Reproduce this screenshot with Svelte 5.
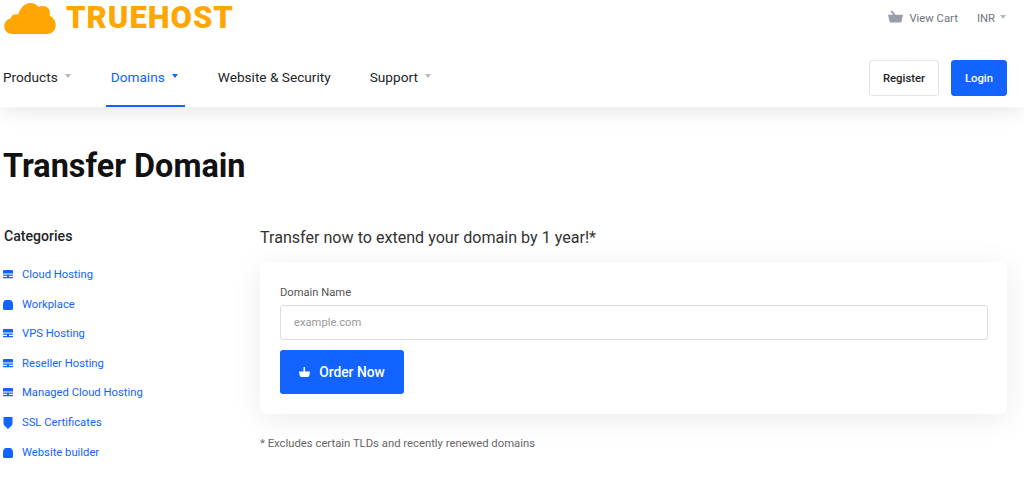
<script>
  const categories = [
    { name: 'Cloud Hosting', icon: 'server' },
    { name: 'Workplace', icon: 'box' },
    { name: 'VPS Hosting', icon: 'server' },
    { name: 'Reseller Hosting', icon: 'server' },
    { name: 'Managed Cloud Hosting', icon: 'server' },
    { name: 'SSL Certificates', icon: 'shield' },
    { name: 'Website builder', icon: 'box' }
  ];
  const nav = [
    { label: 'Products', caret: true },
    { label: 'Domains', caret: true, active: true },
    { label: 'Website & Security' },
    { label: 'Support', caret: true }
  ];
</script>

{#snippet catIcon(kind)}
  <svg class="cat-icon" viewBox="0 0 10 12" aria-hidden="true">
    {#if kind === 'server'}
      <path d="M.8 1h8.400c.5 0 .8.300.8.800V4.500H0V1.800C0 1.300.300 1 .8 1zM0 5.500h10v1.300H6V8h4v1.300H0V8h4V6.800H0z" fill="currentColor" />
    {:else if kind === 'box'}
      <path d="M3 1h4c1.300 0 2 .8 2.400 2L10 4.500v5.300A1.200 1.200 0 0 1 8.800 11H1.200A1.200 1.200 0 0 1 0 9.800V4.500L.6 3C1 1.800 1.700 1 3 1z" fill="currentColor" />
    {:else}
      <path d="M.5 0h9v6.500C9.500 8.500 7 10 5 12 3 10 .5 8.500.5 6.500z" fill="currentColor" />
    {/if}
  </svg>
{/snippet}

<header class="header">
  <div class="top">
    <div class="logo">
      <svg class="cloud" viewBox="0 0 53 35" aria-hidden="true">
        <path d="M8 33C3.500 33 0 29.500 0 25c0-4 2.800-7.300 6.500-8C7 14.500 9.200 12.700 12 12.700c.8 0 1.500.1 2.200.4C16 6.500 21 1 27 1c3.500 0 6.500 1.600 8.500 4.200C36.800 4.400 38.300 4 40 4c4 0 7 3 7 7 0 1-.1 2-.5 3C50.300 15.500 53 19.800 53 24c0 5-4 9-8.500 9z" fill="#ffa602" />
      </svg>
      <span class="logo-text">TRUEHOST</span>
    </div>
    <div class="top-right">
      <a class="cart" href="#cart">
        <svg class="cart-icon" viewBox="0 0 16 13" aria-hidden="true">
          <path d="M0 4.500h5.500L2.800 1.200 4.300 0l3.600 4.500H16l-1.600 7.200a1.500 1.500 0 0 1-1.500 1.300H3.100a1.500 1.500 0 0 1-1.500-1.300z" fill="currentColor" />
        </svg>
        View Cart
      </a>
      <span class="currency">INR<i class="caret"></i></span>
    </div>
  </div>
  <div class="navbar">
    <nav class="nav">
      {#each nav as item}
        <a class="nav-link" class:active={item.active} href="#nav">
          {item.label}
          {#if item.caret}<i class="caret"></i>{/if}
        </a>
      {/each}
    </nav>
    <div class="auth">
      <button class="btn-register">Register</button>
      <button class="btn-login">Login</button>
    </div>
  </div>
</header>

<main class="main">
  <h1>Transfer Domain</h1>
  <div class="columns">
    <aside class="sidebar">
      <h2>Categories</h2>
      <ul>
        {#each categories as cat}
          <li><a href="#cat">{@render catIcon(cat.icon)}{cat.name}</a></li>
        {/each}
      </ul>
    </aside>
    <section class="content">
      <p class="lead">Transfer now to extend your domain by 1 year!*</p>
      <div class="card">
        <label for="domain">Domain Name</label>
        <input id="domain" type="text" placeholder="example.com" />
        <button class="btn-order">
          <svg class="order-icon" viewBox="0 0 11 10" aria-hidden="true">
            <path d="M4.500 0H6v4.500h5l-.7 4A1.800 1.800 0 0 1 8.500 10h-6A1.800 1.800 0 0 1 .7 8.500L0 4.500h4.500z" fill="currentColor" />
          </svg>
          Order Now
        </button>
      </div>
      <p class="note">* Excludes certain TLDs and recently renewed domains</p>
    </section>
  </div>
</main>

<style>
  :global(body) {
    background: #fff;
    font-family: Roboto, "Liberation Sans", sans-serif;
    color: #212529;
  }

  a { text-decoration: none; color: inherit; }

  .header {
    background: #fff;
    height: 107px;
    box-shadow: 0 0 24px rgba(0, 0, 0, 0.13);
    position: relative;
  }

  .top {
    height: 47px;
    display: flex;
    justify-content: space-between;
    padding: 0 18px 0 4px;
  }

  .logo {
    display: flex;
    align-items: flex-start;
    gap: 10px;
    padding-top: 2px;
  }

  .cloud {
    width: 52px;
    height: 34px;
    display: block;
  }

  .logo-text {
    font-size: 31px;
    font-weight: 900;
    line-height: 32px;
    color: #ffa602;
    letter-spacing: 1px;
  }

  .top-right {
    display: flex;
    align-items: center;
    height: 36px;
    font-size: 11.300px;
    color: #6c757d;
  }

  .cart {
    display: flex;
    align-items: center;
    gap: 6px;
  }

  .cart-icon {
    width: 15px;
    height: 13px;
    margin-top: -3px;
    color: #9a9ca8;
  }

  .currency {
    margin-left: 19px;
    display: flex;
    align-items: center;
    gap: 5px;
  }

  .caret {
    display: inline-block;
    width: 0;
    height: 0;
    border-left: 3.500px solid transparent;
    border-right: 3.500px solid transparent;
    border-top: 4px solid #b5b8bd;
    margin-bottom: 2px;
  }

  .navbar {
    height: 60px;
    display: flex;
    justify-content: space-between;
    align-items: flex-start;
    padding: 0 17px 0 3px;
  }

  .nav {
    display: flex;
  }

  .nav-link {
    display: flex;
    align-items: center;
    gap: 7px;
    height: 60px;
    font-size: 13.650px;
    color: #212529;
    margin-right: 39px;
    box-sizing: border-box;
  }

  .nav-link.active {
    color: #1263ff;
    padding: 2px 7px 0 5px;
    margin: 0 33px 0 -4px;
    border-bottom: 2px solid #1263ff;
  }

  .nav-link.active .caret { border-top-color: #1263ff; }

  .auth {
    display: flex;
    gap: 12px;
    padding-top: 13px;
  }

  button { font-family: inherit; cursor: pointer; }

  .btn-register,
  .btn-login {
    height: 36px;
    border-radius: 3px;
    font-size: 11.300px;
    font-weight: 500;
  }

  .btn-register {
    width: 70px;
    background: #fff;
    color: #212529;
    border: 1px solid #e4e4e4;
  }

  .btn-login {
    width: 56px;
    background: #1263ff;
    color: #fff;
    border: 1px solid #1263ff;
  }

  .main { padding: 0 17px 0 3px; }

  h1 {
    margin: 0;
    padding-top: 40px;
    font-size: 32.400px;
    line-height: 38px;
    font-weight: 700;
    color: #111;
  }

  .columns {
    display: flex;
    margin-top: 41px;
  }

  .sidebar { width: 257px; flex: none; }

  h2 {
    margin: 0;
    padding-left: 1px;
    font-size: 14.100px;
    line-height: 20px;
    font-weight: 500;
  }

  ul {
    list-style: none;
    margin: 21px 0 0;
    padding: 0;
  }

  li {
    height: 29.600px;
    font-size: 11.250px;
    line-height: 16px;
    color: #1263ff;
  }

  li a {
    display: flex;
    align-items: center;
    gap: 9px;
    height: 16px;
  }

  .cat-icon {
    width: 10px;
    height: 12px;
    flex: none;
  }

  .content { flex: 1; min-width: 0; }

  .lead {
    margin: 0;
    padding-top: 1px;
    font-size: 16.100px;
    line-height: 22px;
    color: #333;
  }

  .card {
    margin-top: 13px;
    background: #fff;
    border-radius: 6px;
    box-shadow: 0 5px 30px rgba(0, 0, 0, 0.08);
    padding: 22px 19px 20px 20px;
    height: 152px;
    box-sizing: border-box;
    display: flex;
    flex-direction: column;
    align-items: flex-start;
  }

  label {
    font-size: 11.200px;
    line-height: 17px;
    color: #555;
  }

  input {
    margin-top: 4px;
    width: 100%;
    height: 35px;
    box-sizing: border-box;
    border: 1px solid #dcdcdc;
    border-radius: 3px;
    padding: 0 13px;
    font-family: inherit;
    font-size: 11.200px;
  }

  input::placeholder { color: #9a9a9a; opacity: 1; }

  .btn-order {
    margin-top: 10px;
    width: 124px;
    height: 45px;
    background: #1263ff;
    color: #fff;
    border: 0;
    border-radius: 3px;
    font-size: 13.800px;
    font-weight: 500;
    display: flex;
    align-items: center;
    justify-content: center;
    gap: 9px;
  }

  .order-icon { width: 11px; height: 10px; }

  .note {
    margin: 22px 0 0;
    font-size: 11.300px;
    line-height: 16px;
    color: #666;
  }
</style>
